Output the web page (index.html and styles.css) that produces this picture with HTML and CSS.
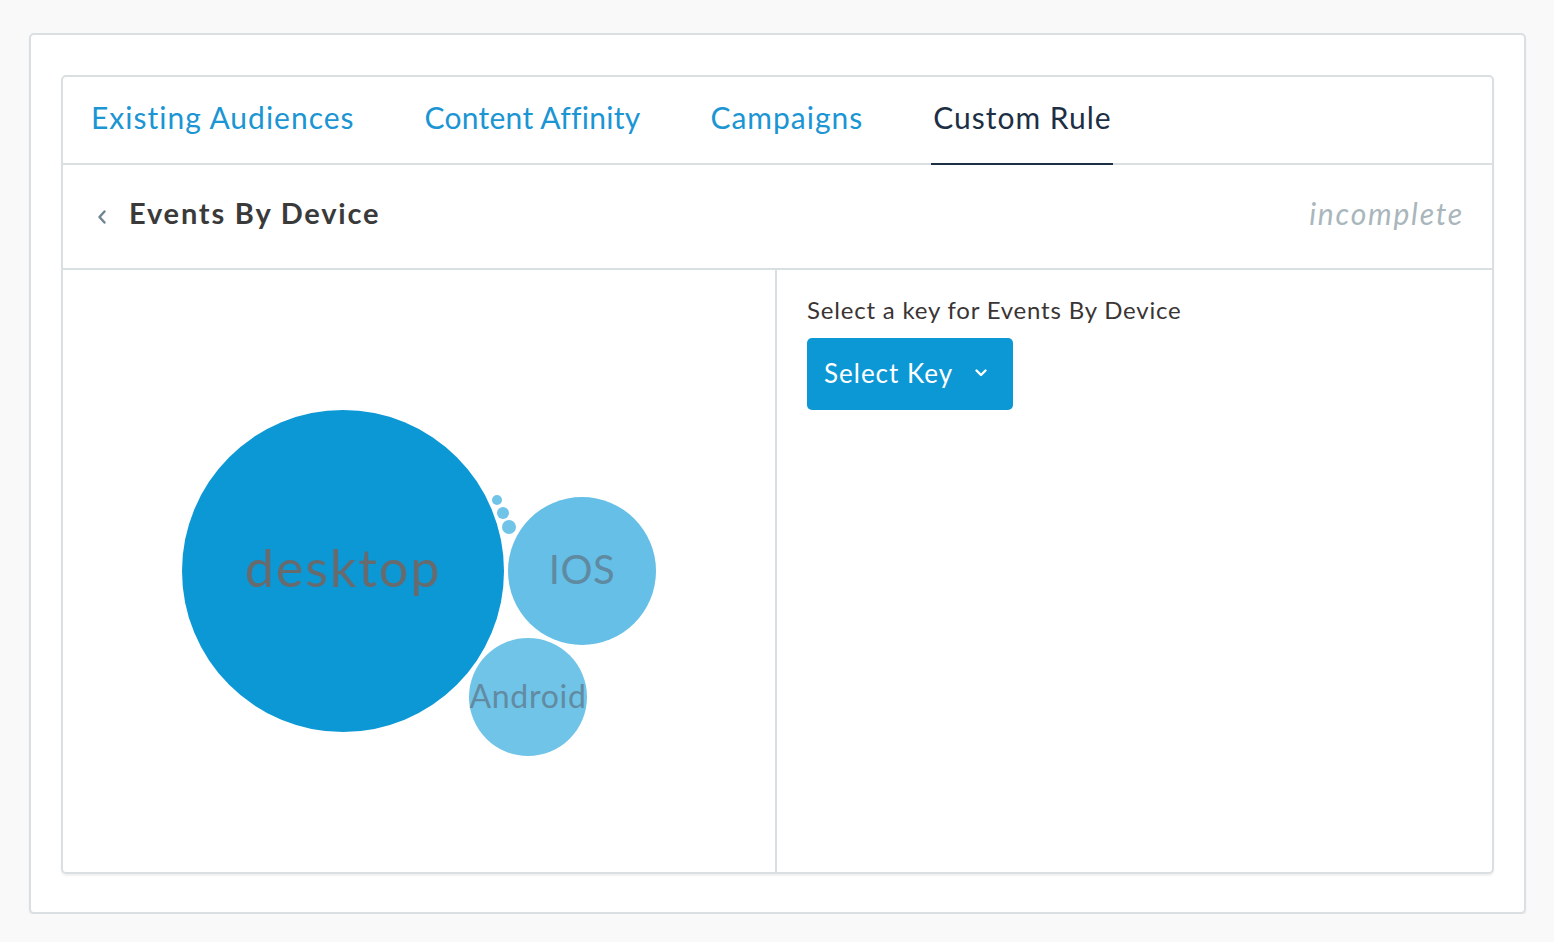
FILE: index.html
```html
<!DOCTYPE html>
<html>
<head>
<meta charset="utf-8">
<link rel="stylesheet" href="styles.css">
</head>
<body>
<div class="outer">
  <div class="card">
    <nav class="tabs">
      <a class="tab">Existing Audiences</a>
      <a class="tab tight">Content Affinity</a>
      <a class="tab">Campaigns</a>
      <a class="tab active">Custom Rule</a>
    </nav>
    <div class="header">
      <div class="title">
        <svg class="back" width="12" height="16" viewBox="0 0 12 16"><path d="M8.5 2.5 L3.5 8 L8.5 13.5" fill="none" stroke="#6f8591" stroke-width="2.5" stroke-linecap="round" stroke-linejoin="round"/></svg>
        <h1>Events By Device</h1>
      </div>
      <span class="status">incomplete</span>
    </div>
    <div class="body">
      <div class="chart">
        <svg width="712" height="602" viewBox="0 0 712 602" class="bubbles">
          <circle cx="280" cy="301" r="161" fill="#0c97d5"/>
          <circle cx="519" cy="301" r="74" fill="#65bfe6"/>
          <circle cx="465" cy="427" r="59" fill="#70c4e8"/>
          <circle cx="434" cy="230" r="5" fill="#70c4e8"/>
          <circle cx="440" cy="243" r="6" fill="#70c4e8"/>
          <circle cx="446" cy="257" r="7" fill="#70c4e8"/>
          <text x="280" y="317" class="lbl-desktop" text-anchor="middle">desktop</text>
          <text x="519" y="314" class="lbl-ios" text-anchor="middle">IOS</text>
          <text x="465" y="438" class="lbl-android" text-anchor="middle">Android</text>
        </svg>
      </div>
      <div class="keys">
        <p class="prompt">Select a key for Events By Device</p>
        <button class="select">Select Key
          <svg width="14" height="10" viewBox="0 0 14 10"><path d="M2.5 2.5 L7 7 L11.5 2.5" fill="none" stroke="#fff" stroke-width="2.4" stroke-linecap="round" stroke-linejoin="round"/></svg>
        </button>
      </div>
    </div>
  </div>
</div>
</body>
</html>
```
FILE: styles.css
```css
html, body {
  margin: 0;
  padding: 0;
  background: #f9f9f9;
  font-family: "Lato", "Open Sans", sans-serif;
}
body {
  padding: 33px 0 0 29px;
}
.outer {
  box-sizing: border-box;
  width: 1497px;
  height: 881px;
  background: #fff;
  border: 2px solid #dadfe2;
  border-radius: 5px;
  padding: 40px 30px;
  box-shadow: 0 2px 2px rgba(0, 0, 0, 0.06);
}
.card {
  box-sizing: border-box;
  height: 799px;
  border: 2px solid #dadfe2;
  border-radius: 5px;
  display: flex;
  flex-direction: column;
  box-shadow: 0 2px 2px rgba(0, 0, 0, 0.06);
}
.tabs {
  display: flex;
  gap: 67px;
  height: 86px;
  padding-left: 26px;
  border-bottom: 2px solid #dadfe2;
}
.tab {
  display: flex;
  align-items: center;
  padding: 0 1px 6px 2px;
  font-size: 30px;
  letter-spacing: 1px;
  color: #1b95d3;
  margin-bottom: -2px;
  border-bottom: 2px solid transparent;
}
.tab.tight {
  letter-spacing: 0.25px;
}
.tab.active {
  color: #1d2f44;
  border-bottom: 2px solid #1d2f44;
}
.header {
  display: flex;
  align-items: center;
  justify-content: space-between;
  height: 104px;
  border-bottom: 2px solid #dadfe2;
  padding: 0 28px 0 33px;
}
.title {
  display: flex;
  align-items: center;
  gap: 21px;
}
.back {
  display: block;
  margin-top: 1px;
}
h1 {
  margin: -7px 0 0;
  font-size: 29px;
  font-weight: 700;
  letter-spacing: 1.8px;
  color: #3a3a3a;
}
.status {
  font-size: 30px;
  font-style: italic;
  letter-spacing: 1.8px;
  color: #a9b6bc;
  margin: -6px 0 0 0;
}
.body {
  flex: 1;
  display: flex;
}
.chart {
  width: 712px;
  border-right: 2px solid #dadfe2;
}
.bubbles {
  display: block;
}
.lbl-desktop {
  font-family: "Lato", sans-serif;
  font-size: 52px;
  letter-spacing: 2px;
  fill: #686b6e;
}
.lbl-ios {
  font-family: "Lato", sans-serif;
  font-size: 40px;
  letter-spacing: 0.5px;
  fill: #5f8aa1;
}
.lbl-android {
  font-family: "Lato", sans-serif;
  font-size: 32px;
  letter-spacing: 0.7px;
  fill: #628ba2;
}
.keys {
  flex: 1;
  padding: 25px 30px;
}
.prompt {
  margin: 0 0 14px;
  font-size: 24px;
  letter-spacing: 0.8px;
  color: #3a3434;
}
.select {
  display: flex;
  align-items: center;
  gap: 21px;
  height: 72px;
  width: 206px;
  padding: 0 16px 2px 17px;
  border: none;
  border-radius: 5px;
  background: #0c97d5;
  color: #fff;
  font-family: "Lato", sans-serif;
  font-size: 26px;
  letter-spacing: 1px;
}
```
